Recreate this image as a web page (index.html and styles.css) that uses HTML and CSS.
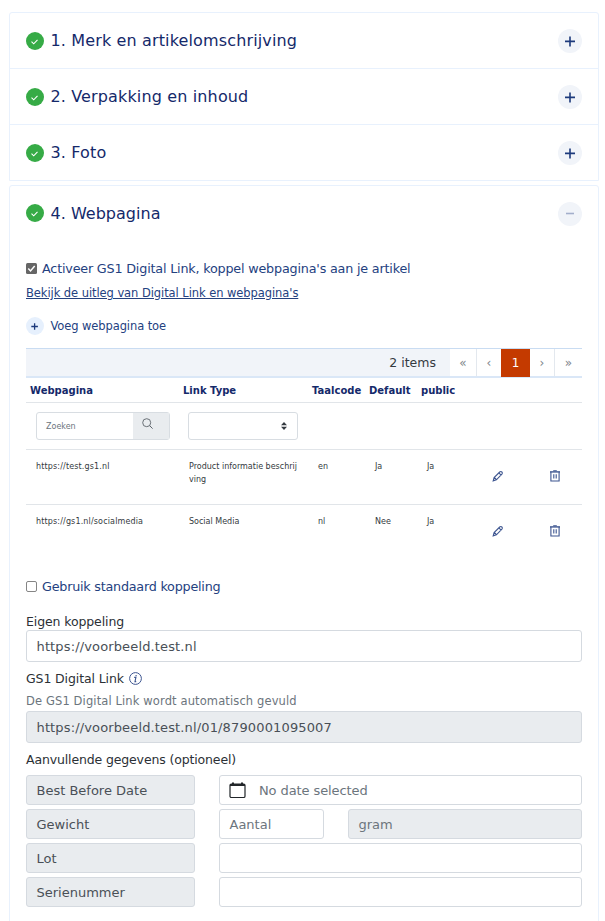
FILE: index.html
```html
<!DOCTYPE html>
<html lang="nl">
<head>
<meta charset="utf-8">
<title>Webpagina</title>
<link rel="stylesheet" href="styles.css">
</head>
<body>
<svg class="defs" width="0" height="0">
  <symbol id="ok" viewBox="0 0 18 18"><circle cx="9" cy="9" r="9" fill="#36ab46"/><path d="M5.5 9.6l2.2 2.2 3.8-3.9" fill="none" stroke="#fff" stroke-width="1.1"/></symbol>
  <symbol id="plus" viewBox="0 0 24 24"><circle cx="12" cy="12" r="12" fill="#f1f4f9"/><path d="M7 12.4h10M12 7.4v10" stroke="#1d3a7c" stroke-width="1.6"/></symbol>
  <symbol id="minus" viewBox="0 0 24 24"><circle cx="12" cy="12" r="12" fill="#f1f4f9"/><path d="M8 11.5h8" stroke="#a3afcb" stroke-width="1.6"/></symbol>
  <symbol id="pencil" viewBox="0 0 12 12"><path d="M1.2 10.8l.9-3.2L7.7 2q1.2-1 2.2 0t0 2.2L4.4 9.8zM2.3 7.4l2.2 2.2M6.9 2.9l2.2 2.2" fill="none" stroke="#3d5590" stroke-width="1.1"/></symbol>
  <symbol id="trash" viewBox="0 0 12 12"><path d="M1 1.9h10" stroke="#3d5590" stroke-width="1.4"/><path d="M4.2.7h3.6M1.9 2v9h8.2V2M4.8 4.2v4.2M7.2 4.2v4.2" fill="none" stroke="#3d5590" stroke-width="1.1"/></symbol>
</svg>
<main class="page">
  <section class="group">
    <div class="step"><svg class="ok"><use href="#ok"/></svg><h2>1. Merk en artikelomschrijving</h2><svg class="toggle"><use href="#plus"/></svg></div>
    <div class="step"><svg class="ok"><use href="#ok"/></svg><h2>2. Verpakking en inhoud</h2><svg class="toggle"><use href="#plus"/></svg></div>
    <div class="step"><svg class="ok"><use href="#ok"/></svg><h2>3. Foto</h2><svg class="toggle"><use href="#plus"/></svg></div>
  </section>
  <section class="group open">
    <div class="step"><svg class="ok"><use href="#ok"/></svg><h2>4. Webpagina</h2><svg class="toggle"><use href="#minus"/></svg></div>
    <div class="content">
      <div class="check activate"><svg class="box" viewBox="0 0 11 11"><rect width="11" height="11" rx="1.5" fill="#666"/><path d="M2.3 5.6l2.2 2.3 4.2-5" fill="none" stroke="#fff" stroke-width="1.5"/></svg><span>Activeer GS1 Digital Link, koppel webpagina's aan je artikel</span></div>
      <div class="help"><a>Bekijk de uitleg van Digital Link en webpagina's</a></div>
      <div class="add"><svg viewBox="0 0 18 18"><circle cx="9" cy="9" r="9" fill="#e6f0fd"/><path d="M5.3 9.5h6.6M8.6 6.2v6.6" stroke="#1d3a7c" stroke-width="1.3"/></svg><span>Voeg webpagina toe</span></div>
      <div class="pager">
        <span class="count">2 items</span>
        <span class="pg first">«</span><span class="pg prev">‹</span><span class="pg current">1</span><span class="pg next">›</span><span class="pg last">»</span>
      </div>
      <div class="row head"><span>Webpagina</span><span>Link Type</span><span>Taalcode</span><span>Default</span><span>public</span></div>
      <div class="row filter">
        <div class="search"><span>Zoeken</span><i><svg viewBox="0 0 11 11"><circle cx="4.7" cy="4.7" r="4" fill="none" stroke="#5c636a" stroke-width=".9"/><path d="M7.6 7.6l3 3" stroke="#5c636a"/></svg></i></div>
        <div class="select"><svg viewBox="0 0 6 8"><path d="M0 3.2L3 0l3 3.2zM0 4.8L3 8l3-3.2z" fill="#343a40"/></svg></div>
      </div>
      <div class="row data"><span class="url">https://test.gs1.nl</span><span>Product informatie beschrij<br>ving</span><span>en</span><span>Ja</span><span>Ja</span><svg class="act"><use href="#pencil"/></svg><svg class="act"><use href="#trash"/></svg></div>
      <div class="row data final"><span class="url">https://gs1.nl/socialmedia</span><span>Social Media</span><span>nl</span><span>Nee</span><span>Ja</span><svg class="act"><use href="#pencil"/></svg><svg class="act"><use href="#trash"/></svg></div>
      <div class="check standard"><svg class="box" viewBox="0 0 11 11"><rect x=".5" y=".5" width="10" height="10" rx="1.5" fill="#fff" stroke="#858585"/></svg><span>Gebruik standaard koppeling</span></div>
      <div class="label own">Eigen koppeling</div>
      <div class="field wide">https://voorbeeld.test.nl</div>
      <div class="label link"><span>GS1 Digital Link</span><svg viewBox="0 0 13 13"><circle cx="6.5" cy="6.5" r="5.9" fill="none" stroke="#3d5590" stroke-width="1"/><path d="M5.2 5.4h1.7l-.9 4.2h1.2M7.1 3v1.2" fill="none" stroke="#3d5590" stroke-width="1.1"/></svg></div>
      <div class="note">De GS1 Digital Link wordt automatisch gevuld</div>
      <div class="field wide off">https://voorbeeld.test.nl/01/8790001095007</div>
      <div class="label extra">Aanvullende gegevens (optioneel)</div>
      <div class="extras">
        <div class="field off">Best Before Date</div><div class="field hint span date"><svg viewBox="0 0 17 17"><rect x="1" y="2" width="15" height="13.5" rx="1.3" fill="none" stroke="#212529" stroke-width="1.2"/><path d="M1 3h15M4 .5v2M13 .5v2" stroke="#212529" stroke-width="2"/></svg>No date selected</div>
        <div class="field off">Gewicht</div><div class="field hint">Aantal</div><div class="field hint off">gram</div>
        <div class="field off">Lot</div><div class="field span"></div>
        <div class="field off">Serienummer</div><div class="field span"></div>
      </div>
    </div>
  </section>
</main>
</body>
</html>
```
FILE: styles.css
```css
* { box-sizing: border-box; }
body { margin: 0; background: #fff; font-family: Verdana, "DejaVu Sans", sans-serif; color: #343a40; }
.defs { display: block; }
svg { flex: none; }
.page { height: 921px; padding: 12px 6px 0 9px; overflow: hidden; }
.group { border: 1px solid #e8f1fd; border-radius: 3px 3px 0 0; }
.open { margin-top: 4px; height: 760px; }
.step { display: flex; align-items: center; height: 56px; padding: 0 16px; border-bottom: 1px solid #e8f1fd; }
.step:last-child { height: 55px; border-bottom: 0; }
.open .step { height: 54px; border-bottom: 0; }
.step h2 { flex: 1; margin: 0 0 0 6.5px; font-size: 16px; letter-spacing: .14px; font-weight: 400; color: #14296a; white-space: nowrap; }
.open .step h2 { letter-spacing: .02px; }
.ok { width: 18px; height: 18px; }
.toggle { width: 24px; height: 24px; }
.open .toggle { margin-top: 1px; }
.content { padding: 0 16px; }
.check { display: flex; align-items: center; gap: 5px; height: 24px; font-size: 12.75px; letter-spacing: -.19px; color: #24417f; white-space: nowrap; }
.box { width: 11px; height: 11px; }
.activate { margin-top: 16px; }
.help { height: 24px; margin-top: 1px; line-height: 24px; font-size: 11.5px; letter-spacing: -.07px; color: #24417f; white-space: nowrap; }
.help a { text-decoration: underline; }
.add { display: flex; align-items: center; gap: 6.5px; height: 18px; margin-top: 12px; font-size: 11.5px; letter-spacing: -.1px; color: #24417f; }
.add svg { width: 18px; height: 18px; }
.pager { display: flex; height: 30px; margin-top: 13px; background: #f1f4f9; border-top: 1px solid #c9dcf2; border-bottom: 2px solid #dae7f7; font-size: 12.5px; line-height: 28px; }
.count { flex: 1; text-align: right; padding-right: 14px; }
.pg { background: #fff; text-align: center; color: #80868c; border-right: 1px solid #e3e8ee; font-size: 12px; line-height: 29px; height: 27px; }
.first { width: 27px; }
.prev { width: 24px; border-right: 0; }
.current { width: 29px; background: #c43a00; color: #fff; height: 28px; border: 0; }
.next { width: 25px; }
.last { width: 27px; border: 0; }
.row { display: grid; grid-template-columns: 153px 129px 57px 52px 43px 76px 1fr; border-bottom: 1px solid #e1e5e9; }
.head { height: 25px; padding-left: 4px; line-height: 25px; font-size: 10px; font-weight: 700; color: #14296a; }
.filter { height: 47px; padding: 9px 0 0 10px; }
.search, .select { display: flex; height: 28px; border: 1px solid #d8dde2; border-radius: 3px; }
.search { width: 134px; font-size: 8px; line-height: 27px; color: #6c757d; }
.search span { flex: 1; padding-left: 9px; }
.search i { width: 36px; background: #e9ecef; }
.search svg { display: block; width: 11px; height: 11px; margin: 5px 0 0 9px; }
.select { width: 110px; margin-left: -1px; justify-content: flex-end; align-items: center; padding-right: 10px; }
.select svg { width: 6px; height: 8px; }
.data { height: 55px; padding: 10px 0 0 10px; font-size: 8px; line-height: 13px; white-space: nowrap; }
.url { letter-spacing: .15px; }
.final { border-bottom: 0; }
.act { width: 12px; height: 12px; margin: 10px 0 0 22px; }
.act:last-child { margin-left: 3px; }
.standard { margin-top: 14px; letter-spacing: -.23px; }
.label { display: flex; align-items: center; gap: 5px; height: 18px; font-size: 12.5px; letter-spacing: -.11px; color: #2b3035; }
.label svg { width: 13px; height: 13px; }
.own { margin-top: 14px; }
.field { display: flex; align-items: center; height: 30px; padding: 1px 9.5px 0; border: 1px solid #d5dae0; border-radius: 3px; background: #fff; font-size: 13px; color: #495057; white-space: nowrap; }
.wide { height: 32px; letter-spacing: .14px; }
.off { background: #e9ecef; }
.hint { color: #6c757d; }
.link { margin-top: 7px; }
.note { height: 24px; line-height: 28px; font-size: 11.5px; letter-spacing: .12px; color: #6c757d; }
.extra { margin-top: 7px; letter-spacing: -.14px; }
.extras { display: grid; grid-template-columns: 169px 105px 1fr; column-gap: 24px; row-gap: 4px; margin-top: 7px; }
.span { grid-column: span 2; }
.date { letter-spacing: -.1px; padding: 0 9px; }
.date svg { width: 17px; height: 17px; margin-right: 13px; }
```
